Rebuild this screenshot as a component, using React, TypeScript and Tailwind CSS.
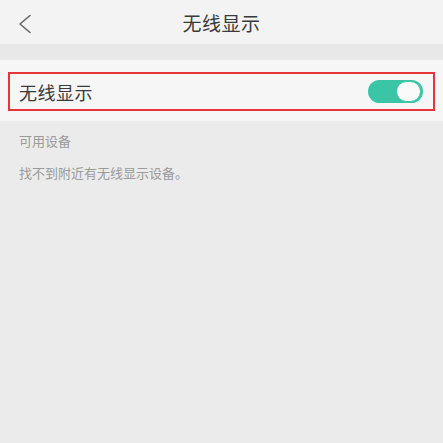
import React from "react";

export default function App() {
  const font = { fontFamily: '"Noto Sans CJK SC", "Noto Sans", sans-serif' };
  return (
    <div className="w-[443px] h-[443px] bg-[#ebebeb] flex flex-col" style={font}>
      <div className="h-[44px] bg-[#f3f3f3] relative flex items-center justify-center">
        <svg className="absolute left-[17px] top-[14px]" width="16" height="20" viewBox="0 0 16 20">
          <path d="M13 1.5 L3 10 L13 18.5" fill="none" stroke="#666" strokeWidth="1.6" strokeLinecap="round" strokeLinejoin="round" />
        </svg>
        <span className="text-[19px] leading-none text-[#3a3a3a] tracking-[0.5px]">无线显示</span>
      </div>
      <div className="h-[16px] bg-[#e8e8e8]" />
      <div className="h-[61px] bg-[#f6f6f6] px-[8px] pt-[12px]">
        <div className="h-[39px] border-2 border-[#e8333a] flex items-center justify-between pl-[9px] pr-[10px]">
          <span className="text-[18px] leading-none text-[#3a3a3a] tracking-[0.5px]">无线显示</span>
          <div className="w-[55px] h-[23px] rounded-full bg-[#3ac6a6] flex items-center justify-end pr-[2px]">
            <div className="w-[25px] h-[21px] rounded-full bg-[#fafafa] border-[1.5px] border-[#3ac6a6]" />
          </div>
        </div>
      </div>
      <div className="pl-[19px] pt-[13px]">
        <div className="text-[13px] leading-none text-[#9a9a9a]">可用设备</div>
        <div className="text-[13px] leading-none text-[#9a9a9a] mt-[19px]">找不到附近有无线显示设备。</div>
      </div>
    </div>
  );
}
